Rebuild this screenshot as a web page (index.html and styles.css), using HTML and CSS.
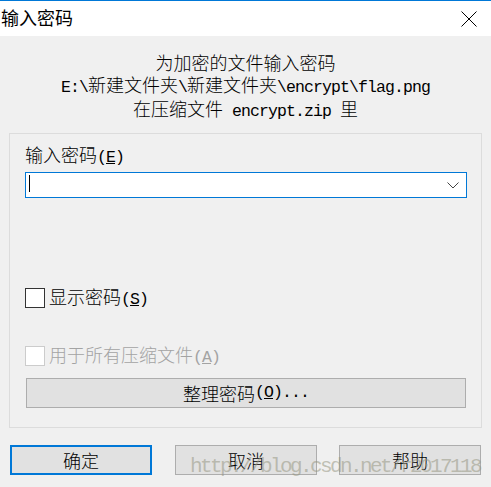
FILE: index.html
```html
<!DOCTYPE html>
<html lang="zh">
<head>
<meta charset="utf-8">
<title>输入密码</title>
<link rel="stylesheet" href="styles.css">
</head>
<body>
<div class="titlebar">
  <span class="title">输入密码</span>
  <svg class="close" width="16" height="16" viewBox="0 0 16 16"><line x1="0.5" y1="0.5" x2="15.5" y2="15.5"/><line x1="15.5" y1="0.5" x2="0.5" y2="15.5"/></svg>
</div>
<div class="body">
  <div class="info">
    <div>为加密的文件输入密码</div>
    <div><span class="lat">E:\</span>新建文件夹<span class="lat">\</span>新建文件夹<span class="lat">\encrypt\flag.png</span></div>
    <div>在压缩文件<span class="lat"> encrypt.zip </span>里</div>
  </div>
  <div class="group">
    <div class="label">输入密码<span class="lat">(<u>E</u>)</span></div>
    <div class="combo">
      <span class="caret"></span>
      <svg class="chev" width="12" height="7" viewBox="0 0 12 7"><polyline points="0.5,0.5 6,6 11.5,0.5"/></svg>
    </div>
    <div class="check check-show"><span class="box"></span><span>显示密码<span class="lat">(<u>S</u>)</span></span></div>
    <div class="check check-all disabled"><span class="box"></span><span>用于所有压缩文件<span class="lat">(<u>A</u>)</span></span></div>
    <div class="btn wide">整理密码<span class="lat">(<u>O</u>)...</span></div>
  </div>
  <div class="actions">
    <div class="btn default">确定</div>
    <div class="btn cancel">取消</div>
    <div class="btn help">帮助</div>
  </div>
</div>
<div class="watermark">http://blog.csdn.net/r2017118</div>
</body>
</html>
```
FILE: styles.css
```css
body {
  margin: 0;
  width: 491px;
  height: 487px;
  background: #f0f0f0;
  font-family: "Noto Sans CJK SC", sans-serif;
  font-weight: 300;
  color: #000;
  overflow: hidden;
  position: relative;
}
.lat {
  font-family: "Liberation Mono", monospace;
  font-weight: 400;
  font-size: 16.5px;
  letter-spacing: -0.9px;
}
.titlebar {
  height: 35px;
  border-top: 1px solid #0078d7;
  background: #fff;
  display: flex;
  justify-content: space-between;
  align-items: flex-start;
}
.title {
  font-size: 18px;
  font-weight: 400;
  line-height: 33px;
  padding-left: 1px;
}
.close {
  margin-top: 10px;
  margin-right: 14px;
  stroke: #000;
  stroke-width: 1;
}
.body {
  padding-top: 16px;
}
.info {
  height: 65px;
  text-align: center;
  font-size: 18px;
  line-height: 21.5px;
}
.group {
  margin: 16px 0 0 9px;
  width: 473px;
  height: 295px;
  box-sizing: border-box;
  border: 1px solid #dcdcdc;
  padding: 10px 14px 0 15px;
}
.label {
  font-size: 18px;
  line-height: 21px;
  height: 21px;
}
.combo {
  margin-top: 7px;
  height: 26px;
  box-sizing: border-box;
  border: 1px solid #0078d7;
  background: #fff;
  display: flex;
  align-items: center;
  justify-content: space-between;
  padding: 0 7px 0 3px;
}
.caret {
  width: 1px;
  height: 17px;
  background: #000;
  align-self: flex-start;
  margin-top: 2px;
}
.chev {
  fill: none;
  stroke: #444;
  stroke-width: 1;
}
.check {
  display: flex;
  align-items: center;
  gap: 4px;
  height: 20px;
  font-size: 18px;
  line-height: 20px;
}
.check-show {
  margin-top: 90px;
}
.check-all {
  margin-top: 38px;
}
.box {
  width: 20px;
  height: 20px;
  box-sizing: border-box;
  border: 1px solid #333;
  background: #fff;
}
.disabled {
  color: #a3a3a3;
}
.disabled .box {
  border-color: #cccccc;
}
.btn {
  box-sizing: border-box;
  border: 1px solid #adadad;
  background: #e1e1e1;
  display: flex;
  align-items: center;
  justify-content: center;
  font-size: 18px;
  line-height: 20px;
}
.wide {
  margin: 12px 1px 0;
  height: 30px;
}
.actions {
  display: flex;
  margin-top: 17px;
  padding-left: 10px;
}
.actions .btn {
  width: 142px;
  height: 30px;
}
.btn.default {
  border: 2px solid #0078d7;
}
.btn.cancel {
  margin-left: 23px;
}
.btn.help {
  margin-left: 22px;
}
.watermark {
  position: absolute;
  left: 190px;
  top: 455px;
  font-family: "Liberation Mono", monospace;
  font-weight: 400;
  font-size: 21px;
  letter-spacing: -2.6px;
  line-height: 24px;
  color: rgba(150, 150, 130, 0.55);
  white-space: nowrap;
}
```
